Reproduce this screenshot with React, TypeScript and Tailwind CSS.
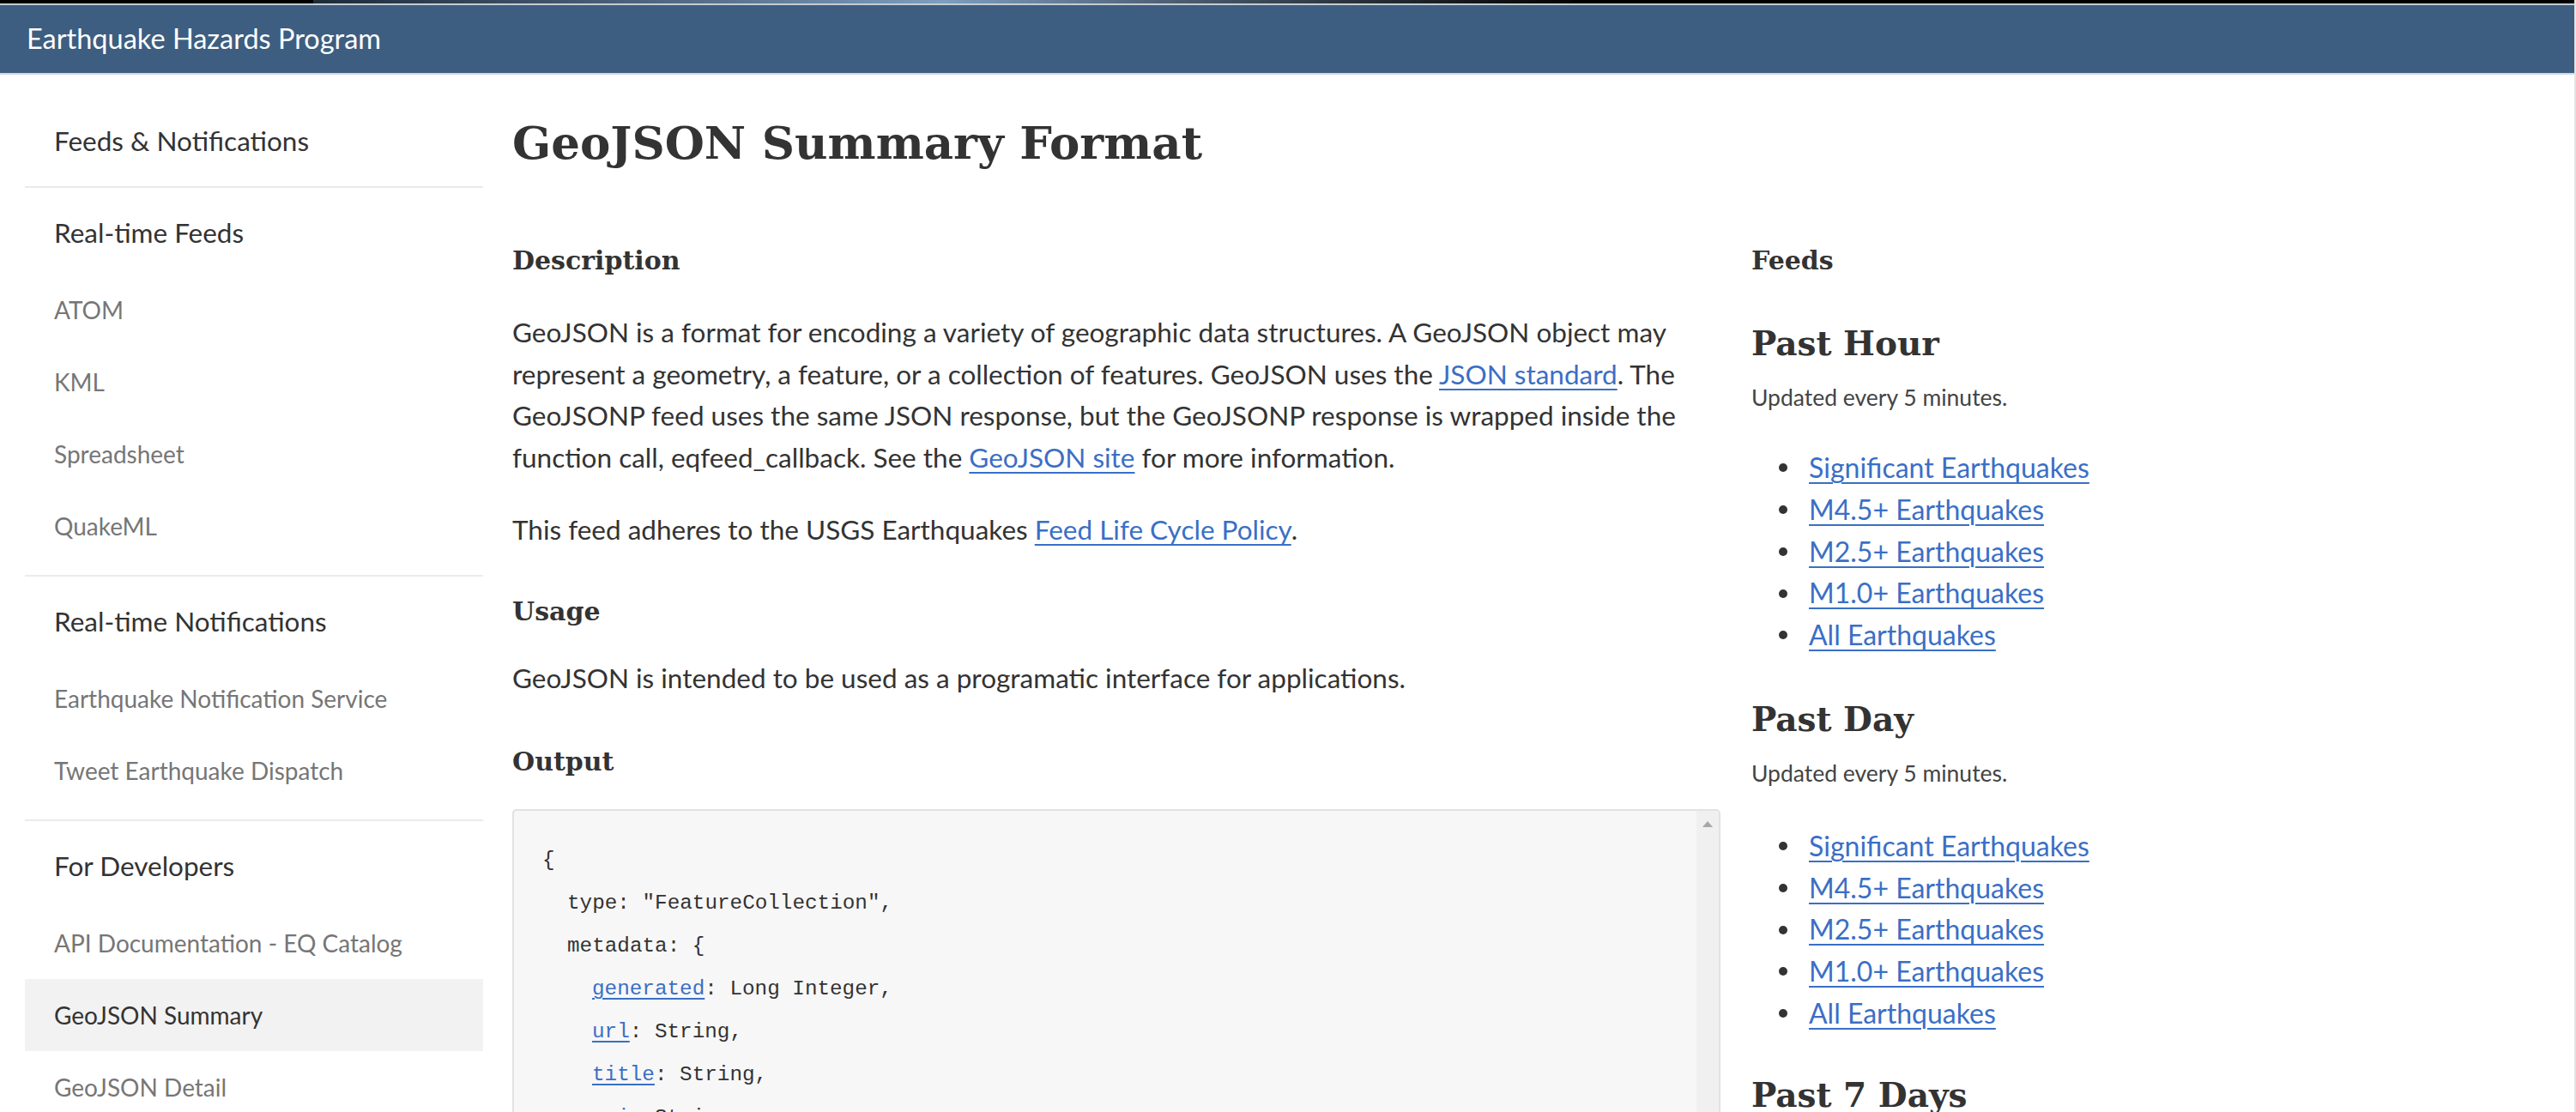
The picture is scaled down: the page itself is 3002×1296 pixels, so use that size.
import React from 'react';

const sans = { fontFamily: 'Lato, "Open Sans", sans-serif' };
const serif = { fontFamily: '"DejaVu Serif", "Liberation Serif", serif' };

type NavSection = { title: string; items: string[]; active?: string };

const sections: NavSection[] = [
  { title: 'Real-time Feeds', items: ['ATOM', 'KML', 'Spreadsheet', 'QuakeML'] },
  { title: 'Real-time Notifications', items: ['Earthquake Notification Service', 'Tweet Earthquake Dispatch'] },
  {
    title: 'For Developers',
    items: ['API Documentation - EQ Catalog', 'GeoJSON Summary', 'GeoJSON Detail'],
    active: 'GeoJSON Summary',
  },
];

const feedLinks = [
  'Significant Earthquakes',
  'M4.5+ Earthquakes',
  'M2.5+ Earthquakes',
  'M1.0+ Earthquakes',
  'All Earthquakes',
];

// indent, linked key (optional), rest of the line
const codeLines: [number, string | null, string][] = [
  [0, null, '{'],
  [1, null, 'type: "FeatureCollection",'],
  [1, null, 'metadata: {'],
  [2, 'generated', ': Long Integer,'],
  [2, 'url', ': String,'],
  [2, 'title', ': String,'],
  [2, 'api', ': String,'],
];

function A({ children }: { children: React.ReactNode }) {
  return <a href="#" className="text-[#3a6fc6] underline decoration-2 underline-offset-[5px]">{children}</a>;
}

function Sidebar() {
  return (
    <nav className="w-[534px] shrink-0 pt-[23px]" style={sans}>
      <div className="border-b-2 border-[#ebebeb] pb-[7px]">
        <div className="pl-[34px] pt-[38px] pb-[30px] text-[31.5px] leading-[32px] text-[#333]">Feeds &amp; Notifications</div>
      </div>
      {sections.map((s, i) => (
        <div key={s.title} className={i < sections.length - 1 ? 'border-b-2 border-[#ebebeb] pb-[15px]' : ''}>
          <div className="pl-[34px] pt-[36px] pb-[32px] text-[31.5px] leading-[32px] text-[#333]">{s.title}</div>
          {s.items.map((item) => (
            <a
              key={item}
              href="#"
              className={
                'flex h-[84px] items-center pl-[34px] text-[28px] ' +
                (s.active === item ? 'bg-[#f2f2f2] text-[#333]' : 'text-[#767676]')
              }
            >
              {item}
            </a>
          ))}
        </div>
      ))}
    </nav>
  );
}

function Code() {
  return (
    <div className="relative mt-[35px] h-[400px] overflow-hidden rounded-[5px] border-2 border-[#e2e2e2] bg-[#f7f7f7]">
      <div className="absolute right-0 top-0 bottom-0 flex w-[26px] justify-center bg-[#f0f0f0] pt-[12px]">
        <svg width="12" height="7" viewBox="0 0 12 7">
          <path d="M6 0 L12 7 L0 7 Z" fill="#a8a8a8" />
        </svg>
      </div>
      <div
        className="pl-[33px] pt-[33px] text-[24.3px] leading-[50px] text-[#333]"
        style={{ fontFamily: '"Liberation Mono", "DejaVu Sans Mono", monospace' }}
      >
        {codeLines.map(([indent, key, rest], i) => (
          <div key={i} className={indent === 0 ? '' : indent === 1 ? 'pl-[29px]' : 'pl-[58px]'}>
            {key && (
              <a href="#" className="text-[#3a6fc6] underline decoration-2 underline-offset-4">
                {key}
              </a>
            )}
            <span className="whitespace-pre">{rest}</span>
          </div>
        ))}
      </div>
    </div>
  );
}

function Main() {
  return (
    <main className="ml-[34px] w-[1408px] shrink-0 text-[#333]">
      <h1 className="mt-[47px] text-[53px] font-bold leading-[64px]" style={serif}>
        GeoJSON Summary Format
      </h1>
      <h2 className="mt-[86px] text-[30px] font-bold leading-[40px]" style={serif}>
        Description
      </h2>
      <div style={sans} className="text-[31.5px] leading-[48.5px]">
        <p className="mt-[39px] whitespace-nowrap">
          GeoJSON is a format for encoding a variety of geographic data structures. A GeoJSON object may
          <br />
          represent a geometry, a feature, or a collection of features. GeoJSON uses the <A>JSON standard</A>. The
          <br />
          GeoJSONP feed uses the same JSON response, but the GeoJSONP response is wrapped inside the
          <br />
          function call, eqfeed_callback. See the <A>GeoJSON site</A> for more information.
        </p>
        <p className="mt-[36px]">
          This feed adheres to the USGS Earthquakes <A>Feed Life Cycle Policy</A>.
        </p>
      </div>
      <h2 className="mt-[51px] text-[30px] font-bold leading-[40px]" style={serif}>
        Usage
      </h2>
      <p style={sans} className="mt-[33px] text-[31.5px] leading-[48.5px]">
        GeoJSON is intended to be used as a programatic interface for applications.
      </p>
      <h2 className="mt-[54px] text-[30px] font-bold leading-[40px]" style={serif}>
        Output
      </h2>
      <Code />
    </main>
  );
}

function FeedGroup({ title, mt, listMt }: { title: string; mt: string; listMt: string }) {
  return (
    <section className={mt}>
      <h3 className="text-[39px] font-bold leading-[44px]" style={serif}>
        {title}
      </h3>
      <p style={sans} className="mt-[23px] text-[26.5px] leading-[36px] text-[#444]">
        Updated every 5 minutes.
      </p>
      <ul style={sans} className={listMt + ' text-[32px] leading-[48.75px]'}>
        {feedLinks.map((l) => (
          <li key={l} className="flex items-center">
            <span className="ml-[32px] mr-[25px] h-[10px] w-[10px] shrink-0 rounded-full bg-[#333]" />
            <A>{l}</A>
          </li>
        ))}
      </ul>
    </section>
  );
}

function Feeds() {
  return (
    <aside className="ml-[36px] w-[600px] shrink-0 text-[#333]">
      <h2 className="mt-[197px] text-[30px] font-bold leading-[40px]" style={serif}>
        Feeds
      </h2>
      <FeedGroup title="Past Hour" mt="mt-[54px]" listMt="mt-[40px]" />
      <FeedGroup title="Past Day" mt="mt-[51px]" listMt="mt-[43px]" />
      <section className="mt-[48px]">
        <h3 className="text-[39px] font-bold leading-[44px]" style={serif}>
          Past 7 Days
        </h3>
      </section>
    </aside>
  );
}

export default function App() {
  return (
    <div className="h-[1296px] overflow-hidden border-r-2 border-[#e4e4e4] bg-white">
      <div className="relative h-[4px] bg-black">
        <div className="absolute left-[365px] top-0 h-[4px] w-[1467px] bg-gradient-to-r from-[#1d2b3a] via-[#7d9ec0] to-[#050505]" />
      </div>
      <div className="h-[2px] bg-[#c5ccd4]" />
      <header className="flex h-[81px] items-center border-b-2 border-[#cfd8e2] bg-[#3d5e80] pl-[31px]">
        <span style={sans} className="text-[32.5px] text-white">
          Earthquake Hazards Program
        </span>
      </header>
      <div className="flex pl-[29px]">
        <Sidebar />
        <Main />
        <Feeds />
      </div>
    </div>
  );
}
